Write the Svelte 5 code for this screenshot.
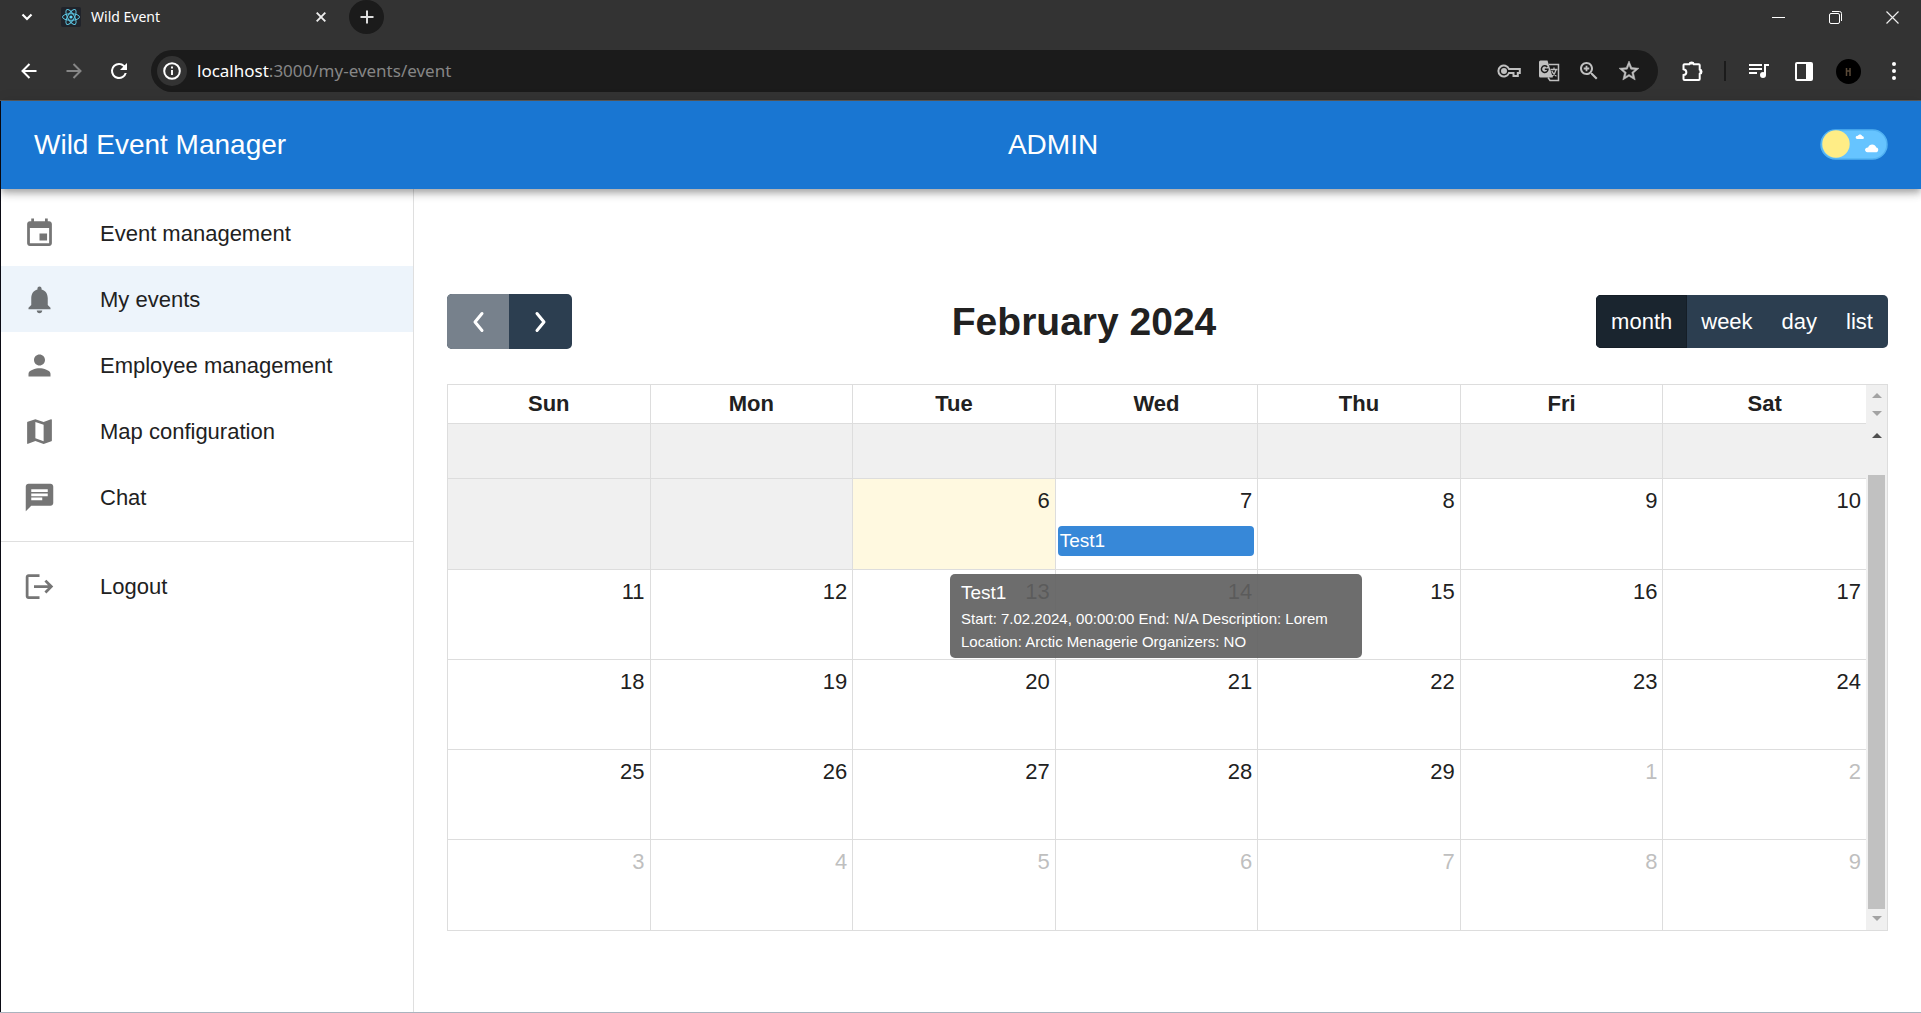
<script>
  const menu = [
    { label: 'Event management', icon: 'M16 1v2H8V1H6v2H5c-1.11 0-1.99.9-1.99 2L3 19c0 1.1.89 2 2 2h14c1.1 0 2-.9 2-2V5c0-1.1-.9-2-2-2h-1V1h-2zm3 18H5V8h14v11zM17.5 12h-5.5v5h5.5z' },
    { label: 'My events', active: true, icon: 'M12 22c1.1 0 2-.9 2-2h-4c0 1.1.89 2 2 2zm6-6v-5c0-3.07-1.64-5.64-4.5-6.32V4c0-.83-.67-1.5-1.5-1.5s-1.5.67-1.5 1.5v.68C7.63 5.36 6 7.92 6 11v5l-2 2v1h16v-1l-2-2z' },
    { label: 'Employee management', icon: 'M12 12c2.21 0 4-1.79 4-4s-1.79-4-4-4-4 1.79-4 4 1.79 4 4 4zm0 2c-2.67 0-8 1.34-8 4v2h16v-2c0-2.66-5.33-4-8-4z' },
    { label: 'Map configuration', icon: 'm20.5 3-.16.03L15 5.1 9 3 3.36 4.9c-.21.07-.36.25-.36.48V20.5c0 .28.22.5.5.5l.16-.03L9 18.9l6 2.1 5.64-1.9c.21-.07.36-.25.36-.48V3.5c0-.28-.22-.5-.5-.5zM15 19l-6-2.11V5l6 2.11V19z' },
    { label: 'Chat', icon: 'M20 2H4c-1.1 0-1.99.9-1.99 2L2 22l4-4h14c1.1 0 2-.9 2-2V4c0-1.1-.9-2-2-2zM6 9h12v2H6V9zm8 5H6v-2h8v2zm4-6H6V6h12v2z' },
  ];
  const logoutIcon = 'm17 7-1.41 1.41L18.17 11H8v2h10.17l-2.58 2.58L17 17l5-5zM4 5h8V3H4c-1.1 0-2 .9-2 2v14c0 1.1.9 2 2 2h8v-2H4V5z';

  const views = ['month', 'week', 'day', 'list'];
  let view = $state('month');

  const weekdays = ['Sun', 'Mon', 'Tue', 'Wed', 'Thu', 'Fri', 'Sat'];
  // Days before "today" are disabled and carry no number.
  const weeks = [
    [null, null, 6, 7, 8, 9, 10],
    [11, 12, 13, 14, 15, 16, 17],
    [18, 19, 20, 21, 22, 23, 24],
    [25, 26, 27, 28, 29, 1, 2],
    [3, 4, 5, 6, 7, 8, 9],
  ].map((days, w) => days.map((n) => ({
    n,
    off: n === null,
    other: w >= 3 && n < 10,
    today: w === 0 && n === 6,
    event: w === 0 && n === 7,
  })));
</script>

<div class="window">
  <div class="chrome">
    <div class="tabs">
      <button class="tab-search" aria-label="Search tabs">
        <svg width="12" height="8" viewBox="0 0 12 8"><path d="M1.5 1.5 6 6l4.500-4.500" fill="none" stroke="#fff" stroke-width="2.200" /></svg>
      </button>
      <div class="tab">
        <svg class="favicon" width="20" height="20" viewBox="0 0 20 20">
          <rect width="20" height="20" rx="2" fill="#20232a" />
          <circle cx="10" cy="10" r="1.600" fill="#61dafb" />
          <g fill="none" stroke="#5cc6e2" stroke-width="1">
            <ellipse cx="10" cy="10" rx="8.500" ry="3.300" />
            <ellipse cx="10" cy="10" rx="8.500" ry="3.300" transform="rotate(60 10 10)" />
            <ellipse cx="10" cy="10" rx="8.500" ry="3.300" transform="rotate(120 10 10)" />
          </g>
        </svg>
        <span class="tab-title">Wild Event</span>
        <button class="tab-close" aria-label="Close tab">
          <svg width="10" height="10" viewBox="0 0 10 10"><path d="m.7.7 8.600 8.600m0-8.600L.7 9.300" stroke="#eee" stroke-width="1.900" /></svg>
        </button>
      </div>
      <button class="new-tab" aria-label="New tab">
        <svg width="14" height="14" viewBox="0 0 14 14"><path d="M7 .5v13M.5 7h13" stroke="#ddd" stroke-width="2" /></svg>
      </button>
      <div class="controls">
        <button aria-label="Minimize"><svg width="13" height="13" viewBox="0 0 13 13"><path d="M0 6.500h13" stroke="#fff" /></svg></button>
        <button aria-label="Restore">
          <svg width="13" height="13" viewBox="0 0 13 13" fill="none" stroke="#fff"><rect x=".5" y="2.500" width="10" height="10" rx="1.500" /><path d="M3 .5h7.500a2 2 0 0 1 2 2V10" /></svg>
        </button>
        <button aria-label="Close"><svg width="13" height="13" viewBox="0 0 13 13"><path d="m.5.5 12 12m0-12-12 12" stroke="#eee" stroke-width="1.200" /></svg></button>
      </div>
    </div>

    <div class="toolbar">
      <button class="tool" aria-label="Back">
        <svg width="16" height="16" viewBox="0 0 16 16" fill="none" stroke="#fff" stroke-width="2"><path d="M15.500 8H2M8.500 1 1.500 8l7 7" /></svg>
      </button>
      <button class="tool" aria-label="Forward" disabled>
        <svg width="16" height="16" viewBox="0 0 16 16" fill="none" stroke="#868686" stroke-width="2"><path d="M.5 8H14M7.500 1l7 7-7 7" /></svg>
      </button>
      <button class="tool" aria-label="Reload">
        <svg width="24" height="24" viewBox="0 0 24 24" fill="#fff"><path d="M17.650 6.350A7.960 7.960 0 0 0 12 4a8 8 0 1 0 7.730 10h-2.080A6 6 0 1 1 12 6c1.660 0 3.140.69 4.220 1.780L13 11h7V4l-2.350 2.350z" /></svg>
      </button>
      <div class="omnibox">
        <button class="site-info" aria-label="View site information">
          <svg width="18" height="18" viewBox="0 0 18 18"><circle cx="9" cy="9" r="7.800" fill="none" stroke="#fff" stroke-width="2" /><path d="M9 8v5M9 4.600v2" stroke="#fff" stroke-width="1.900" /></svg>
        </button>
        <span class="url">localhost<span class="path">:3000/my-events/event</span></span>
        <button aria-label="Passwords">
          <svg width="24" height="14" viewBox="0 0 24 14" fill="none" stroke="#c0c0c0" stroke-width="2"><path d="M12 5h10.800v4h-2v3h-4.300V9H12a5.500 5.500 0 1 1 0-4z" /><circle cx="7" cy="7" r="2" fill="#c0c0c0" /></svg>
        </button>
        <button aria-label="Translate this page">
          <svg width="22" height="22" viewBox="0 0 22 22" fill="none">
            <path d="M11 4.500h9.500v16H12l-2-3" stroke="#c0c0c0" stroke-width="1.500" />
            <path d="M2.500.5h7l5.300 17H2.500A1.500 1.500 0 0 1 1 16V2A1.500 1.500 0 0 1 2.500.500z" fill="#c0c0c0" />
            <path d="M9.200 7A3.300 3.300 0 1 0 10 9.300H6.800" stroke="#1b1b1b" stroke-width="1.500" />
            <path d="M12.500 9.500h7M16 7.500v2M18.200 9.500c-.8 3-2.300 5.500-4.200 7M13.800 11c1 2.200 2.600 4 4.600 5.300" stroke="#c0c0c0" stroke-width="1.300" />
          </svg>
        </button>
        <button aria-label="Zoom">
          <svg width="24" height="24" viewBox="0 0 24 24" fill="#c0c0c0"><path d="M15.500 14h-.79l-.28-.27C15.410 12.590 16 11.110 16 9.500 16 5.910 13.090 3 9.500 3S3 5.910 3 9.500 5.910 16 9.500 16c1.610 0 3.090-.59 4.230-1.570l.27.28v.79l5 4.990L20.490 19l-4.990-5zm-6 0C7.010 14 5 11.990 5 9.500S7.010 5 9.500 5 14 7.010 14 9.500 11.990 14 9.500 14zm.9-7.300H8.600v1.900H6.700v1.800h1.900v1.900h1.800v-1.900h1.900V8.600h-1.900z" /></svg>
        </button>
        <button aria-label="Bookmark this tab">
          <svg width="24" height="24" viewBox="0 0 24 24" fill="#c0c0c0" stroke="#c0c0c0" stroke-width=".5"><path d="M22 9.240l-7.190-.62L12 2 9.190 8.630 2 9.240l5.460 4.730L5.820 21 12 17.270 18.180 21l-1.630-7.030L22 9.240zM12 15.400l-3.760 2.270 1-4.280-3.320-2.880 4.380-.38L12 6.100l1.710 4.040 4.380.38-3.320 2.880 1 4.280L12 15.400z" /></svg>
        </button>
      </div>
      <button class="tool" aria-label="Extensions">
        <svg width="22" height="22" viewBox="0 0 22 22"><path d="M2.500 4.200h4.800a2.400 2.400 0 0 1 4.600 0h4.800a1 1 0 0 1 1 1v4.300a2.300 2.300 0 0 1 0 4.500v5a1 1 0 0 1-1 1H2.500a1 1 0 0 1-1-1v-3.900c3.800-.6 3.800-5.200 0-5.900V5.200a1 1 0 0 1 1-1z" fill="none" stroke="#fff" stroke-width="2" /><path d="M7 4.500a2.600 2.600 0 0 1 5.200 0zM17.500 9.200a2.600 2.600 0 0 1 0 5.200z" fill="#fff" /></svg>
      </button>
      <span class="separator"></span>
      <button class="tool" aria-label="Media controls">
        <svg width="24" height="24" viewBox="0 0 24 24" fill="#fff"><path d="M15 5H2v2h13V5zm0 4H2v2h13V9zM2 15h8v-2H2v2zM17 5v8.180a3.200 3.200 0 0 0-1-.18 3 3 0 1 0 3 3V7h3V5h-5z" /></svg>
      </button>
      <button class="tool" aria-label="Side panel">
        <svg width="18" height="19" viewBox="0 0 18 19"><rect x="1" y="1" width="16" height="17" rx="1" fill="none" stroke="#fff" stroke-width="2" /><path d="M11 1h6v17h-6z" fill="#fff" /></svg>
      </button>
      <button class="tool" aria-label="Profile">
        <svg width="25" height="25" viewBox="0 0 25 25"><circle cx="12.500" cy="12.500" r="12.500" /><path d="M10.500 9v8M14 9v8M10.500 12H14" stroke="#5a4a38" stroke-width="1.500" /></svg>
      </button>
      <button class="tool" aria-label="Menu">
        <svg width="4" height="18" viewBox="0 0 4 18" fill="#fff"><circle cx="2" cy="2" r="2" /><circle cx="2" cy="9" r="2" /><circle cx="2" cy="16" r="2" /></svg>
      </button>
    </div>
  </div>

  <div class="page">
    <header class="appbar">
      <span>Wild Event Manager</span>
      <span>ADMIN</span>
      <button class="theme" role="switch" aria-checked="false" aria-label="Dark mode">
        <svg width="68" height="31" viewBox="0 0 68 31">
          <rect x="1" y="1" width="66" height="29" rx="14.500" fill="#66c4ff" stroke="#52b2f2" stroke-width="1.500" />
          <circle cx="16" cy="15" r="13.700" fill="#ffed86" />
          <path d="M36 9.500c-1-2 .8-3 1.900-2.600.6-2 3.600-2 4.200 0 2 .2 2.300 2.400 1 3.200h-6zM47.500 23.300c-3.500-.5-3.200-5 .6-4.800 1-4 7-4.200 8.200 0 2.600.4 2.600 4 .2 4.800z" fill="#fff" />
        </svg>
      </button>
    </header>

    <div class="body">
      <nav class="sidebar">
        <ul>
          {#each menu as item}
            <li><a href="#top" class:active={item.active}><svg width="33" height="33" viewBox="0 0 24 24" fill-rule="evenodd"><path d={item.icon} /></svg>{item.label}</a></li>
          {/each}
        </ul>
        <ul class="last">
          <li><a href="#top"><svg width="33" height="33" viewBox="0 0 24 24"><path d={logoutIcon} /></svg>Logout</a></li>
        </ul>
      </nav>

      <main>
        <div class="cal-bar">
          <div class="group nav-group">
            <button class="prev" disabled aria-label="Previous month"><svg width="14" height="22" viewBox="0 0 14 22"><path d="m11 2.500-7 8.500 7 8.500" /></svg></button>
            <button aria-label="Next month"><svg width="14" height="22" viewBox="0 0 14 22"><path d="m3 2.500 7 8.500-7 8.500" /></svg></button>
          </div>
          <h2>February 2024</h2>
          <div class="group">
            {#each views as v}
              <button class="view" class:pressed={view === v} aria-pressed={view === v} onclick={() => (view = v)}>{v}</button>
            {/each}
          </div>
        </div>

        <div class="frame">
          <table>
            <thead>
              <tr>{#each weekdays as d}<th scope="col">{d}</th>{/each}</tr>
            </thead>
            <tbody>
              <tr class="clipped">{#each weekdays as d}<td class="off"></td>{/each}</tr>
              {#each weeks as week}
                <tr>
                  {#each week as day}
                    <td class:off={day.off} class:today={day.today} class:other={day.other}>
                      {#if day.n}<a class="num" href="#top">{day.n}</a>{/if}
                      {#if day.event}
                        <div class="event-slot">
                          <button class="event" aria-describedby="event-tip">Test1</button>
                          <div class="tip" id="event-tip" role="tooltip">
                            <div class="tip-title">Test1</div>
                            Start: 7.02.2024, 00:00:00 End: N/A Description: Lorem Location: Arctic Menagerie Organizers: NO
                          </div>
                        </div>
                      {/if}
                    </td>
                  {/each}
                </tr>
              {/each}
            </tbody>
          </table>
          <div class="scroll" aria-hidden="true">
            <div class="scroll-head"><i class="up"></i><i class="down"></i></div>
            <i class="up dark"></i>
            <div class="thumb"></div>
            <i class="down"></i>
          </div>
        </div>
      </main>
    </div>
  </div>
</div>

<style>
  :global(body) { background: #fff; }
  * { box-sizing: border-box; }
  button { font: inherit; color: inherit; background: none; border: 0; padding: 0; display: flex; align-items: center; justify-content: center; cursor: pointer; }
  a { color: inherit; text-decoration: none; }
  svg { display: block; flex: none; }
  ul { list-style: none; margin: 0; padding: 0; }

  .window { display: flex; flex-direction: column; min-height: 100vh; font-family: 'Liberation Sans', Arial, sans-serif; font-size: 22px; line-height: 33px; color: #212121; border-bottom: 1px solid #aab3be; }

  .chrome { background: #333; color: #fff; border-bottom: 1px solid #5c5c5c; font-family: 'Noto Sans', 'Open Sans', sans-serif; }
  .tabs { display: flex; align-items: center; height: 34px; padding-left: 6px; }
  .tab-search { width: 41px; height: 34px; }
  .tab { display: flex; align-items: center; width: 282px; padding: 0 3px 0 14px; gap: 10px; }
  .tab-title { font-size: 14px; line-height: 20px; flex: 1; }
  .new-tab { width: 35px; height: 34px; border-radius: 50%; background: #1b1b1b; margin-left: 20px; }
  .controls { display: flex; margin-left: auto; }
  .controls button { width: 57px; height: 34px; }
  .toolbar { display: flex; align-items: center; padding: 16px 5px 8px 6px; }
  .tool { width: 45px; height: 42px; }
  .omnibox { flex: 1; display: flex; align-items: center; height: 42px; border-radius: 21px; background: #1b1b1b; padding: 0 9px 0 6px; margin: 0 12px 0 10px; }
  .omnibox button { width: 40px; height: 40px; }
  .omnibox .site-info { width: 30px; height: 30px; border-radius: 50%; background: #333; }
  .url { flex: 1; margin-left: 10px; font-size: 17px; line-height: 24px; }
  .path { color: #868686; }
  .separator { width: 2px; height: 20px; background: #1b1b1b; margin: 0 10px 0 9px; }

  .page { flex: 1; display: flex; flex-direction: column; border-left: 1px solid #0b0b14; }
  .appbar { position: relative; z-index: 2; display: flex; align-items: center; justify-content: space-between; height: 88px; padding: 0 33px 2px; background: #1976d2; color: #fff; font-size: 28px; box-shadow: 0 3px 6px -1px rgba(0, 0, 0, .2), 0 6px 7px rgba(0, 0, 0, .14), 0 1px 14px rgba(0, 0, 0, .12); }
  .body { flex: 1; display: flex; }

  .sidebar { width: 413px; flex: none; border-right: 1px solid #dfdfdf; }
  .sidebar ul { padding: 11px 0; }
  .sidebar .last { border-top: 1px solid #dfdfdf; }
  .sidebar a { display: flex; align-items: center; gap: 44px; height: 66px; padding: 0 22px; }
  .sidebar .active { background: #edf4fb; }
  .sidebar svg { fill: #757575; }
  .sidebar .active svg { fill: #6d7174; }

  main { flex: 1; min-width: 0; padding: 105px 33px 33px; }
  .cal-bar { display: flex; align-items: center; justify-content: space-between; margin-bottom: 35px; }
  h2 { margin: 0; font-size: 39px; line-height: 46px; font-weight: bold; }
  .group { display: flex; border-radius: 5px; overflow: hidden; background: #2c3e50; color: #fff; }
  .nav-group button { width: 63px; height: 55px; }
  .nav-group .prev { width: 62px; background: #77818c; }
  .nav-group path { fill: none; stroke: #fff; stroke-width: 3; stroke-linecap: round; stroke-linejoin: round; }
  .view { height: 53px; padding: 0 15px; }
  .view + .view { margin-left: -1px; }
  .pressed { background: #1a252f; border: 1px solid #151e27; padding: 0 14px; }

  .frame { display: flex; border: 1px solid #ddd; }
  table { flex: 1; width: 100%; min-width: 0; table-layout: fixed; border-collapse: separate; border-spacing: 0; }
  th { height: 39px; padding: 0 0 2px; border-bottom: 1px solid #ddd; }
  td { height: 90px; padding: 0; vertical-align: top; border-bottom: 1px solid #ddd; }
  th:not(:last-child), td:not(:last-child) { border-right: 1px solid #ddd; }
  tbody tr:last-child td { border-bottom: 0; }
  .clipped td { height: 55px; }
  .off { background: #f0f0f0; }
  .today { background: #fff9e0; }
  .num { display: block; padding: 5px 5px 0; text-align: right; }
  .other { color: #bfbfbf; }
  .event-slot { position: relative; margin: 9px 3px 13px 2px; }
  .event { width: 100%; height: 30px; padding: 0 2px; justify-content: flex-start; border-radius: 4px; background: #3788d8; color: #fff; font-size: 19px; line-height: 28px; }
  .tip { position: absolute; z-index: 1; top: 48px; left: 50%; width: 412px; transform: translateX(-50%); padding: 5px 11px; border-radius: 5px; background: rgba(97, 97, 97, .92); color: #fff; font-size: 15px; line-height: 23px; }
  .tip-title { width: max-content; font-size: 19px; line-height: 28px; }

  .scroll { flex: none; width: 21px; display: flex; flex-direction: column; align-items: center; background: #f0f0f0; padding-bottom: 9px; }
  .scroll-head { display: flex; flex-direction: column; align-items: center; gap: 13px; height: 39px; padding-top: 8px; margin-bottom: 9px; }
  .up, .down { border: 5px solid transparent; }
  .up { border-top: 0; border-bottom-color: #a3a3a3; }
  .down { border-bottom: 0; border-top-color: #a3a3a3; }
  .up.dark { border-bottom-color: #505050; }
  .thumb { flex: 1; width: 17px; margin: 37px 0 7px; background: #c1c1c1; }
</style>
